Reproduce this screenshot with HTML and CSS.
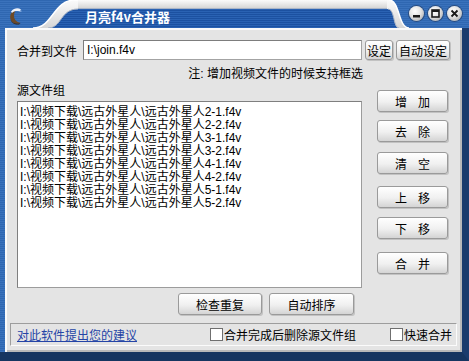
FILE: index.html
```html
<!DOCTYPE html>
<html lang="zh-CN">
<head>
    <meta charset="UTF-8">
    <title>月亮f4v合并器</title>
    <link rel="stylesheet" href="styles.css">
</head>
<body>

<div class="window">
    <div class="titlebar">
        <div class="app-icon">
            <svg width="14" height="18" viewBox="0 0 14 18">
                <path d="M8,3 C3,4 1.5,9 2.5,12 C3.5,16 8,17.5 12.5,16 C8.5,15 6,12.5 6,9 C6,6 7,4.5 8,3 Z" fill="#6e4a26"/>
                <path d="M2.5,12 C3.5,16 8,17.5 12.5,16 L11,17.5 C7,18 3,16 2.5,12 Z" fill="#3b2612"/>
                <path d="M3,4.5 C6,1 10,0.5 13,2.5 L11.5,4.5 C9,3.5 6,4 4,6 Z" fill="#eef2fa"/>
                <path d="M11.5,4.5 L13,2.5 L13.5,5 Z" fill="#8fb0e0"/>
            </svg>
        </div>
        <svg class="tab-left" width="45" height="28" viewBox="0 0 45 28">
            <defs>
                <pattern id="stripeL" width="2" height="2" patternUnits="userSpaceOnUse">
                    <rect width="2" height="1" fill="#1c51a1"/>
                    <rect y="1" width="2" height="1" fill="#2a62b3"/>
                </pattern>
                <linearGradient id="bandL" x1="0" y1="0" x2="0" y2="1">
                    <stop offset="0" stop-color="#fbfbfb"/>
                    <stop offset="1" stop-color="#d6d6d6"/>
                </linearGradient>
            </defs>
            <path d="M0,28 C20,28 20,0 42,0 L45,0 L45,28 Z" fill="url(#bandL)"/>
            <path d="M0,28 C20,28 20,0 42,0 L45,0" fill="none" stroke="#ffffff" stroke-width="1.5"/>
            <path d="M15,28 C29,28 27,9 45,9 L45,28 Z" fill="url(#stripeL)"/>
            <path d="M15,28 C29,28 27,9 45,9" fill="none" stroke="#a9b4c6" stroke-width="1"/>
        </svg>
        <div class="tab-title">月亮f4v合并器</div>
        <svg class="tab-right" width="22" height="28" viewBox="0 0 22 28">
            <defs>
                <pattern id="stripeR" width="2" height="2" patternUnits="userSpaceOnUse">
                    <rect width="2" height="1" fill="#1c51a1"/>
                    <rect y="1" width="2" height="1" fill="#2a62b3"/>
                </pattern>
                <linearGradient id="bandR" x1="0" y1="0" x2="0" y2="1">
                    <stop offset="0" stop-color="#fbfbfb"/>
                    <stop offset="1" stop-color="#d6d6d6"/>
                </linearGradient>
            </defs>
            <path d="M0,0 L2,0 C13,0 11,28 22,28 L0,28 Z" fill="url(#bandR)"/>
            <path d="M2,0 C13,0 11,28 22,28" fill="none" stroke="#ffffff" stroke-width="1.5"/>
            <path d="M0,9 L1,9 C8,9 6,28 12,28 L0,28 Z" fill="url(#stripeR)"/>
            <path d="M1,9 C8,9 6,28 12,28" fill="none" stroke="#a9b4c6" stroke-width="1"/>
        </svg>
        <div class="win-buttons">
            <span class="win-btn">
                <svg width="15" height="15" viewBox="0 0 15 15"><rect x="4" y="9" width="7" height="2.5" fill="#1a1a1a"/></svg>
            </span>
            <span class="win-btn">
                <svg width="15" height="15" viewBox="0 0 15 15"><rect x="4" y="4" width="7" height="7" fill="none" stroke="#1a1a1a" stroke-width="1.6"/><rect x="4" y="4" width="7" height="2" fill="#1a1a1a"/></svg>
            </span>
            <span class="win-btn">
                <svg width="15" height="15" viewBox="0 0 15 15"><path d="M4.5,4.5 L10.5,10.5 M10.5,4.5 L4.5,10.5" stroke="#1a1a1a" stroke-width="1.8"/></svg>
            </span>
        </div>
    </div>

    <div class="frame">
        <div class="panel">
            <div class="target-row">
                <label class="field-label" for="target">合并到文件</label>
                <input class="path-input" id="target" type="text" value="I:\join.f4v">
                <button class="btn btn-set">设定</button>
                <button class="btn btn-auto">自动设定</button>
            </div>

            <div class="note">注: 增加视频文件的时候支持框选</div>

            <div class="main">
                <div class="left-col">
                    <div class="group-label">源文件组</div>
                    <ul class="file-list">
                        <li>I:\视频下载\远古外星人\远古外星人2-1.f4v</li>
                        <li>I:\视频下载\远古外星人\远古外星人2-2.f4v</li>
                        <li>I:\视频下载\远古外星人\远古外星人3-1.f4v</li>
                        <li>I:\视频下载\远古外星人\远古外星人3-2.f4v</li>
                        <li>I:\视频下载\远古外星人\远古外星人4-1.f4v</li>
                        <li>I:\视频下载\远古外星人\远古外星人4-2.f4v</li>
                        <li>I:\视频下载\远古外星人\远古外星人5-1.f4v</li>
                        <li>I:\视频下载\远古外星人\远古外星人5-2.f4v</li>
                    </ul>
                    <div class="bottom-buttons">
                        <button class="btn btn-check">检查重复</button>
                        <button class="btn btn-sort">自动排序</button>
                    </div>
                </div>

                <div class="side-buttons">
                    <button class="btn btn-side">增加</button>
                    <button class="btn btn-side">去除</button>
                    <button class="btn btn-side">清空</button>
                    <button class="btn btn-side">上移</button>
                    <button class="btn btn-side">下移</button>
                    <button class="btn btn-side">合并</button>
                </div>
            </div>

            <div class="status">
                <a class="feedback" href="#">对此软件提出您的建议</a>
                <label class="check check-delete"><input type="checkbox">合并完成后删除源文件组</label>
                <label class="check check-fast"><input type="checkbox">快速合并</label>
            </div>
        </div>
    </div>
</div>

</body>
</html>
```

FILE: styles.css
```css
body {
    margin: 0;
    background-color: #163560;
    font-family: 'Liberation Sans', 'Noto Sans CJK SC', sans-serif;
    font-size: 12px;
    color: #000;
}

.window {
    width: 469px;
    height: 361px;
    display: flex;
    flex-direction: column;
    background: repeating-linear-gradient(to bottom, #2f67b1 0, #2f67b1 1px, #3a72bc 1px, #3a72bc 2px);
}

/* title bar */

.titlebar {
    height: 28px;
    display: flex;
    padding-right: 7px;
}

.app-icon {
    width: 25px;
    padding: 7px 0 0 8px;
}

.tab-left,
.tab-right {
    display: block;
    flex-shrink: 0;
}

.tab-title {
    flex: 1;
    padding: 9px 0 0 7px;
    box-sizing: border-box;
    color: #fff;
    font-family: 'Noto Sans CJK SC', sans-serif;
    font-weight: bold;
    font-size: 13px;
    line-height: 15px;
    background:
        linear-gradient(to bottom, #fbfbfb 0, #d6d6d6 8px, #a9b4c6 8px, #a9b4c6 9px, transparent 9px),
        repeating-linear-gradient(to bottom, #1c51a1 0, #1c51a1 1px, #2a62b3 1px, #2a62b3 2px);
}

.win-buttons {
    width: 53px;
    display: flex;
    gap: 4px;
    padding-top: 6px;
}

.win-btn {
    width: 15px;
    height: 15px;
    border-radius: 50%;
    background: radial-gradient(circle at 40% 35%, #ffffff 0, #e2e2e2 45%, #9a9a9a 100%);
    box-shadow: 0 0 0 1px #2a4d80;
}

.win-btn svg {
    display: block;
}

/* body frame */

.frame {
    flex: 1;
    display: flex;
    padding-left: 5px;
    border-right: 7px solid #1b3c6d;
    border-bottom: 9px solid #163560;
}

.panel {
    flex: 1;
    padding: 12px 12px 6px 12px;
    background-color: #e4e4e4;
    box-shadow: inset 2px 2px 0 #fafafa, inset -2px -2px 0 #b9b9b9;
    display: flex;
    flex-direction: column;
}

.target-row {
    display: flex;
    height: 20px;
    align-items: center;
}

.field-label {
    width: 66px;
}

.path-input {
    width: 279px;
    height: 20px;
    box-sizing: border-box;
    margin: 0;
    padding: 0 0 0 3px;
    border: 1px solid #a3a3a3;
    border-top-color: #7d7d7d;
    border-left-color: #7d7d7d;
    font-family: 'Liberation Sans', 'Noto Sans CJK SC', sans-serif;
    font-size: 12px;
    color: #000;
    background: #fff;
}

.btn {
    box-sizing: border-box;
    margin: 0;
    padding: 0;
    border: 1px solid #9a9a9a;
    border-radius: 3px;
    background: linear-gradient(to bottom, #ffffff 0, #f0f0f0 55%, #d4d4d4 100%);
    box-shadow: 1px 1px 0 #c2c2c2;
    font-family: 'Liberation Sans', 'Noto Sans CJK SC', sans-serif;
    font-size: 12px;
    color: #000;
    cursor: pointer;
}

.btn-set {
    width: 28px;
    height: 20px;
    margin-left: 3px;
}

.btn-auto {
    width: 54px;
    height: 20px;
    margin-left: 3px;
}

.note {
    width: 346px;
    margin-top: 7px;
    line-height: 14px;
    text-align: right;
}

.main {
    display: flex;
}

.left-col {
    width: 345px;
}

.group-label {
    margin-top: 3px;
    line-height: 14px;
}

.file-list {
    list-style: none;
    margin: 3px 0 0 0;
    padding: 4px 0 0 2px;
    height: 187px;
    box-sizing: border-box;
    background: #fff;
    border: 1px solid #9c9c9c;
    border-top-color: #7f7f7f;
    border-left-color: #7f7f7f;
    line-height: 13px;
}

.bottom-buttons {
    display: flex;
    margin-top: 5px;
    padding-left: 161px;
}

.btn-check {
    width: 84px;
    height: 22px;
}

.btn-sort {
    width: 85px;
    height: 22px;
    margin-left: 7px;
}

.side-buttons {
    display: flex;
    flex-direction: column;
    margin-left: 15px;
}

.btn-side {
    width: 71px;
    height: 22px;
    letter-spacing: 11px;
    text-indent: 11px;
}

.btn-side:nth-child(1) { margin-top: 9px; }
.btn-side:nth-child(2) { margin-top: 8px; }
.btn-side:nth-child(3) { margin-top: 10px; }
.btn-side:nth-child(4) { margin-top: 12px; }
.btn-side:nth-child(5) { margin-top: 9px; }
.btn-side:nth-child(6) { margin-top: 13px; }

/* status bar */

.status {
    margin: 8px -7px 0 -7px;
    height: 23px;
    box-sizing: border-box;
    display: flex;
    align-items: center;
    padding-left: 6px;
    border-top: 1px solid #9d9d9d;
    border-left: 1px solid #9d9d9d;
    border-right: 1px solid #fbfbfb;
    border-bottom: 1px solid #fbfbfb;
}

.feedback {
    width: 120px;
    color: #2444a6;
    text-decoration: underline;
}

.check {
    display: flex;
    align-items: center;
}

.check input {
    appearance: none;
    width: 13px;
    height: 13px;
    margin: 0 1px 0 0;
    border: 1px solid #6f6f6f;
    background: #fff;
}

.check-delete {
    margin-left: 73px;
}

.check-fast {
    margin-left: 34px;
}
```
